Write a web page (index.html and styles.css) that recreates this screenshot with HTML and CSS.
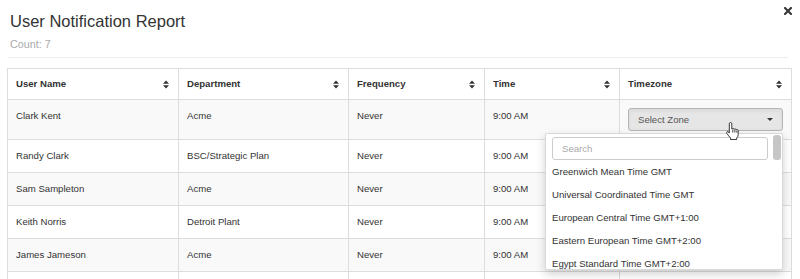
FILE: index.html
```html
<!DOCTYPE html>
<html lang="en">
<head>
    <meta charset="UTF-8">
    <title>User Notification Report</title>
    <link rel="stylesheet" href="styles.css">
</head>
<body>

    <div class="report">
        <div class="report-head">
            <div>
                <h1 class="title">User Notification Report</h1>
                <div class="count">Count: 7</div>
            </div>
            <button class="close" title="Close">
                <svg width="8" height="8" viewBox="0 0 8 8"><path d="M1 1L7 7M7 1L1 7" stroke="#3a3a3a" stroke-width="2.2" stroke-linecap="square"/></svg>
            </button>
        </div>
        <hr class="divider">

        <div class="table-wrap">
            <table class="grid">
                <colgroup>
                    <col class="c-name">
                    <col class="c-dept">
                    <col class="c-freq">
                    <col class="c-time">
                    <col class="c-zone">
                </colgroup>
                <thead>
                    <tr>
                        <th><div class="th-in">User Name <svg class="sort" width="6" height="9" viewBox="0 0 6 9"><path d="M0 3.8L3 .6 6 3.8zM0 5.2L3 8.4 6 5.2z"/></svg></div></th>
                        <th><div class="th-in">Department <svg class="sort" width="6" height="9" viewBox="0 0 6 9"><path d="M0 3.8L3 .6 6 3.8zM0 5.2L3 8.4 6 5.2z"/></svg></div></th>
                        <th><div class="th-in">Frequency <svg class="sort" width="6" height="9" viewBox="0 0 6 9"><path d="M0 3.8L3 .6 6 3.8zM0 5.2L3 8.4 6 5.2z"/></svg></div></th>
                        <th><div class="th-in">Time <svg class="sort" width="6" height="9" viewBox="0 0 6 9"><path d="M0 3.8L3 .6 6 3.8zM0 5.2L3 8.4 6 5.2z"/></svg></div></th>
                        <th><div class="th-in">Timezone <svg class="sort" width="6" height="9" viewBox="0 0 6 9"><path d="M0 3.8L3 .6 6 3.8zM0 5.2L3 8.4 6 5.2z"/></svg></div></th>
                    </tr>
                </thead>
                <tbody>
                    <tr>
                        <td>Clark Kent</td>
                        <td>Acme</td>
                        <td>Never</td>
                        <td>9:00 AM</td>
                        <td>
                            <button class="zone-select"><span>Select Zone</span><span class="caret"></span></button>
                        </td>
                    </tr>
                    <tr>
                        <td>Randy Clark</td>
                        <td>BSC/Strategic Plan</td>
                        <td>Never</td>
                        <td>9:00 AM</td>
                        <td></td>
                    </tr>
                    <tr>
                        <td>Sam Sampleton</td>
                        <td>Acme</td>
                        <td>Never</td>
                        <td>9:00 AM</td>
                        <td></td>
                    </tr>
                    <tr>
                        <td>Keith Norris</td>
                        <td>Detroit Plant</td>
                        <td>Never</td>
                        <td>9:00 AM</td>
                        <td></td>
                    </tr>
                    <tr>
                        <td>James Jameson</td>
                        <td>Acme</td>
                        <td>Never</td>
                        <td>9:00 AM</td>
                        <td></td>
                    </tr>
                    <tr>
                        <td>&nbsp;</td>
                        <td></td>
                        <td></td>
                        <td></td>
                        <td></td>
                    </tr>
                </tbody>
            </table>

            <!-- открытый список зон -->
            <div class="zone-menu">
                <div class="zone-main">
                    <input class="zone-search" type="text" placeholder="Search">
                    <ul class="zone-list">
                        <li>Greenwich Mean Time GMT</li>
                        <li>Universal Coordinated Time GMT</li>
                        <li>European Central Time GMT+1:00</li>
                        <li>Eastern European Time GMT+2:00</li>
                        <li>Egypt Standard Time GMT+2:00</li>
                    </ul>
                </div>
                <div class="zone-scroll"><div class="zone-thumb"></div></div>
            </div>

            <svg class="cursor" width="13" height="18" viewBox="0 0 13 18"><path d="M4.5 .5c.8 0 1.3.5 1.3 1.3v5.2c.3-.4.8-.5 1.2-.5.6 0 1 .4 1.1.8.3-.3.6-.4 1-.4.6 0 1 .4 1.1.9.2-.2.5-.3.8-.3.7 0 1.2.5 1.2 1.3v3.7c0 1.6-.6 2.7-1.5 3.5v1.5H4.5v-1.5C3.3 14.8 1.9 13 .9 11.3c-.4-.7-.3-1.4.2-1.7.5-.3 1.2-.1 1.6.5l.6.9V1.8c0-.8.5-1.3 1.2-1.3zM6.8 7.5v3M8.9 7.9v2.6M10.8 8.8v1.8" fill="#fff" stroke="#222" stroke-width=".9"/></svg>
        </div>
    </div>

</body>
</html>
```

FILE: styles.css
```css
body {
    margin: 0;
    height: 279px;
    overflow: hidden;
    background: #fff;
    font-family: "Liberation Sans", Arial, sans-serif;
    font-size: 9.6px;
    color: #333;
}
.report {
    padding: 0 8px 0 7px;
}
.report-head {
    display: flex;
    justify-content: space-between;
    align-items: flex-start;
    padding-left: 3px;
}
.title {
    margin: 0;
    padding-top: 11px;
    font-size: 16.5px;
    line-height: 20px;
    font-weight: normal;
    color: #333;
}
.count {
    margin-top: 6px;
    font-size: 10.8px;
    line-height: 15px;
    color: #aaa;
}
.close {
    border: none;
    background: none;
    padding: 0;
    margin-top: 7px;
    width: 8px;
    height: 8px;
    display: flex;
    cursor: pointer;
}
.divider {
    border: none;
    border-top: 1px solid #eee;
    margin: 5px 4px 10px 1px;
}
.table-wrap {
    position: relative;
}
.grid {
    width: 784px;
    table-layout: fixed;
    border-collapse: collapse;
}
.c-name { width: 171px; }
.c-dept { width: 170px; }
.c-freq { width: 136px; }
.c-time { width: 135px; }
.c-zone { width: 172px; }
.grid th,
.grid td {
    border: 1px solid #ddd;
    padding: 8px;
    line-height: 16px;
    text-align: left;
    vertical-align: top;
}
.grid th {
    padding: 7px 8px;
    font-weight: bold;
    color: #333;
}
.grid tbody tr:nth-child(odd) td {
    background: #f9f9f9;
}
.th-in {
    display: flex;
    justify-content: space-between;
    align-items: center;
}
.sort {
    fill: #333;
    margin-right: 1px;
}
.zone-select {
    display: flex;
    justify-content: space-between;
    align-items: center;
    width: 100%;
    height: 23px;
    padding: 0 9px;
    font-family: inherit;
    font-size: 9.6px;
    color: #555;
    background: #e6e6e6;
    border: 1px solid #b5b5b5;
    border-radius: 3px;
    box-shadow: inset 0 2px 4px rgba(0, 0, 0, 0.06);
}
.caret {
    border-left: 3px solid transparent;
    border-right: 3px solid transparent;
    border-top: 3px solid #333;
}
.zone-menu {
    position: absolute;
    left: 538px;
    top: 65px;
    width: 238px;
    height: 137px;
    box-sizing: border-box;
    display: flex;
    background: #fff;
    border: 1px solid rgba(0, 0, 0, 0.15);
    border-radius: 2px;
    box-shadow: 0 4px 10px rgba(0, 0, 0, 0.18);
    overflow: hidden;
}
.zone-main {
    flex: 1;
    padding: 3px 6px 0 6px;
    min-width: 0;
}
.zone-search {
    display: block;
    box-sizing: border-box;
    width: 216px;
    height: 23px;
    padding: 0 9px;
    font-family: inherit;
    font-size: 9.6px;
    border: 1px solid #ccc;
    border-radius: 3px;
    outline: none;
}
.zone-search::placeholder {
    color: #aaa;
}
.zone-list {
    list-style: none;
    margin: 0;
    padding: 0;
}
.zone-list li {
    line-height: 23px;
    white-space: nowrap;
    color: #333;
}
.zone-scroll {
    width: 8px;
    padding: 1px 1px 0 0;
}
.zone-thumb {
    height: 25px;
    background: #c6c6c6;
    border-radius: 3px;
}
.cursor {
    position: absolute;
    left: 719px;
    top: 54px;
}
```
